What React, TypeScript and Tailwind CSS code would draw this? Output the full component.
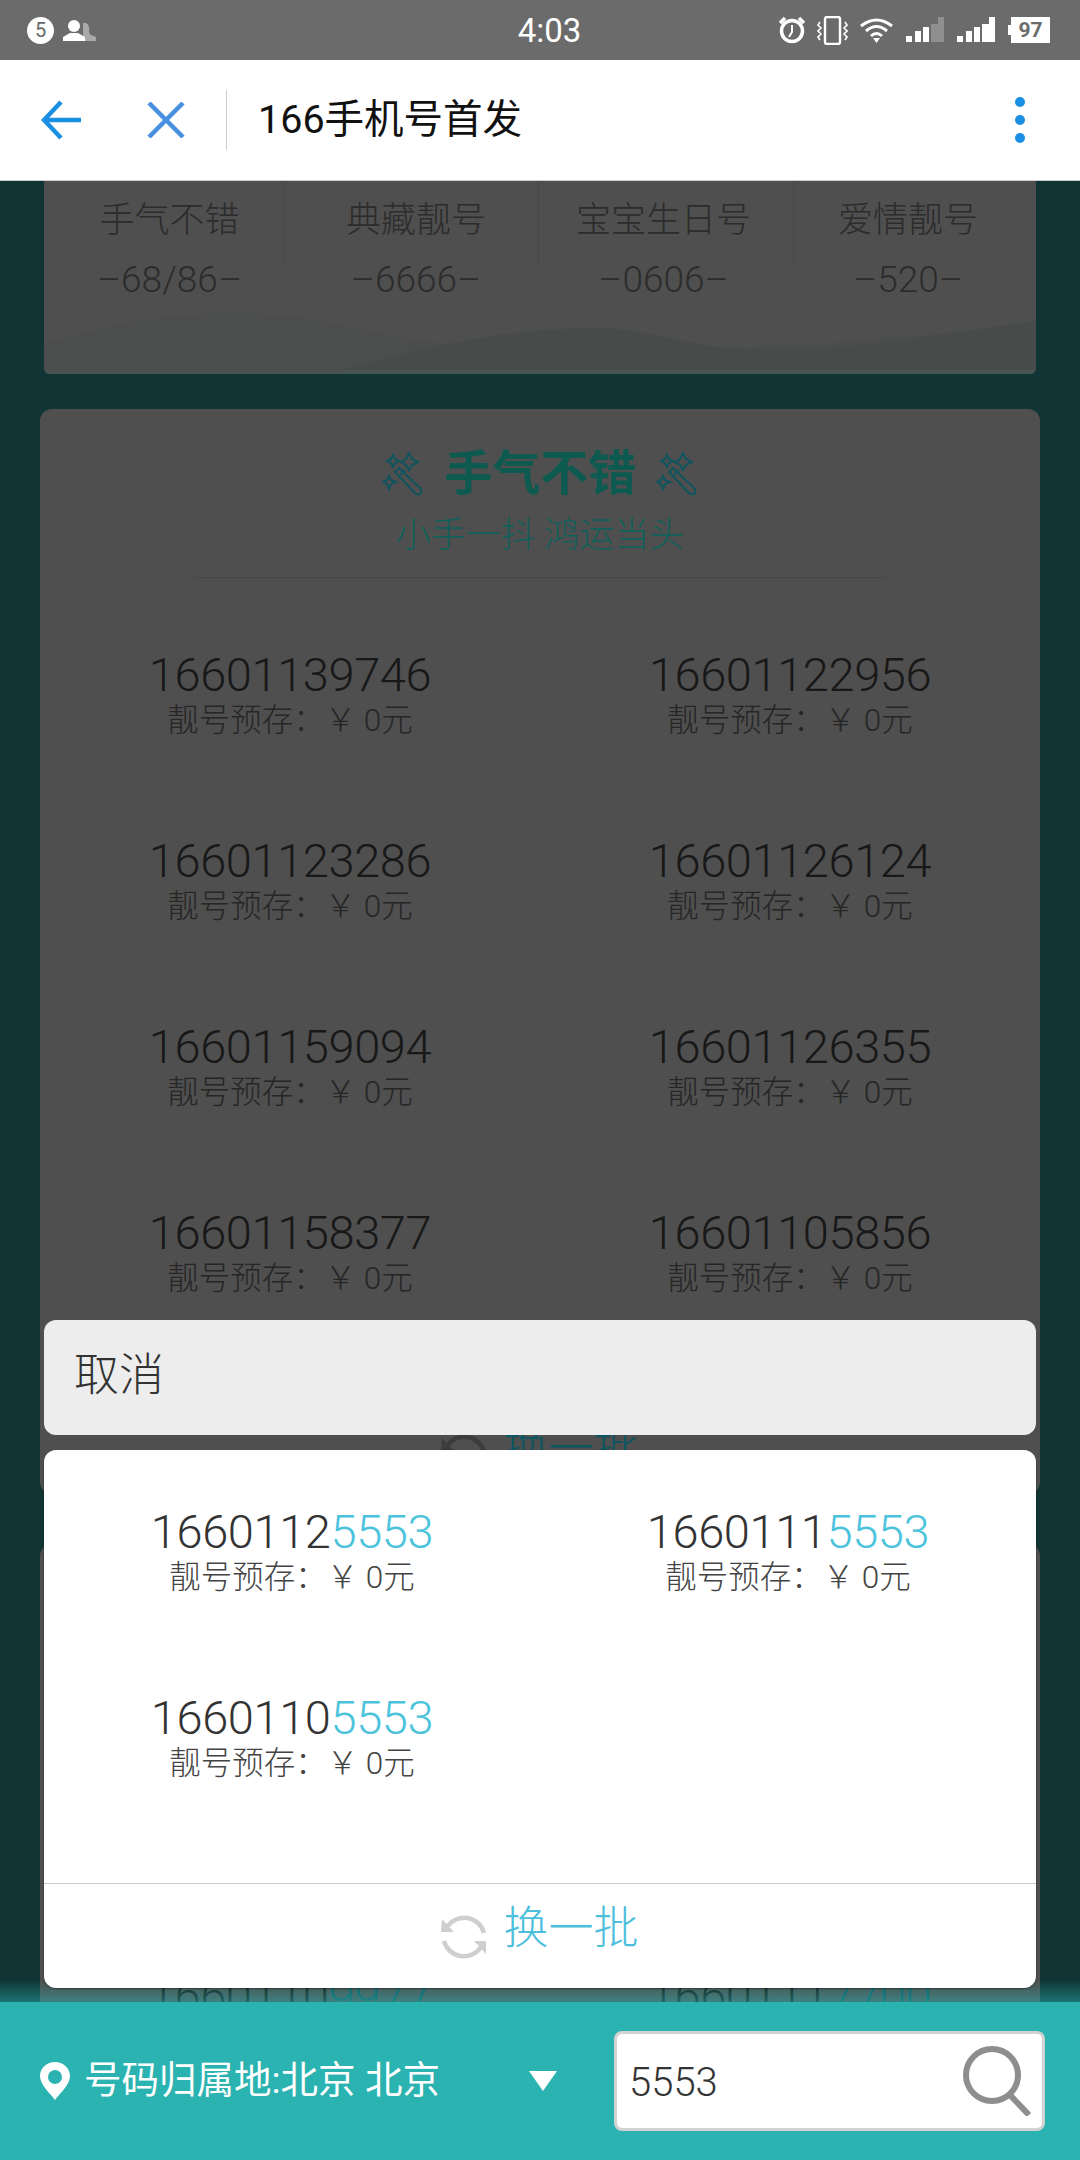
const firstRows = [
  ["16601139746", "16601122956"],
  ["16601123286", "16601126124"],
  ["16601159094", "16601126355"],
  ["16601158377", "16601105856"],
];

const tabs = [
  { title: "手气不错", code: "–68/86–", width: "w-[240px]", nudge: "pl-[12px]" },
  { title: "典藏靓号", code: "–6666–", width: "w-[255px]", nudge: "pl-[10px]" },
  { title: "宝宝生日号", code: "–0606–", width: "w-[255px]", nudge: "pr-[5px]" },
  { title: "爱情靓号", code: "–520–", width: "w-[242px]", nudge: "pr-[14px]" },
];

function Wand() {
  return (
    <svg viewBox="0 0 42 44" className="h-[44px] w-[42px]" fill="none" stroke="#0f5560" strokeWidth="2">
      <path d="M17 16 L39 37 Q40 40 38 42 Q35 43 33 41 L13 20 Z" />
      <path d="M18 23 L23 18" />
      <path d="M27 1 L30 7 L36 10 L30 13 L27 18 L24 13 L19 10 L24 7 Z" />
      <path d="M11 3 L13 7 L17 9 L13 11 L11 15 L9 11 L5 9 L9 7 Z" />
      <path d="M7 24 L9 28 L14 30 L9 32 L7 37 L5 32 L1 30 L5 28 Z" />
    </svg>
  );
}

function Refresh({ color }: { color: string }) {
  return (
    <svg viewBox="0 0 46 46" className="mt-[16px] h-[46px] w-[46px]" fill="none" stroke={color} strokeWidth="4.5">
      <path d="M43 19 A20.5 20.5 0 0 0 6 13" />
      <path d="M3 27 A20.5 20.5 0 0 0 40 33" />
      <path d="M1 5 L0 18 L13 18 Z" fill={color} stroke="none" />
      <path d="M45 40 L45 27 L33 27 Z" fill={color} stroke="none" />
    </svg>
  );
}

function PhoneRow({ number, tail, dim }: { number: string; tail?: string; dim?: boolean }) {
  return (
    <div className="flex h-[186px] flex-col items-center pt-[70px]">
      <div className={`text-[47px] leading-[46px] tracking-[-0.4px] ${dim ? "text-[#181818]" : "text-[#333333]"}`}>
        {number}
        {tail && <span className={dim ? "text-[#0d5a62]" : "text-[#4cc3dc]"}>{tail}</span>}
      </div>
      <div className={`text-[31.5px] leading-[46px] ${dim ? "text-[#262626]" : "text-[#444444]"}`}>靓号预存：￥ 0元</div>
    </div>
  );
}

function StatusIcons() {
  return (
    <div className="flex flex-1 items-center justify-end">
      <svg viewBox="0 0 28 28" className="h-[28px] w-[28px]" fill="none" stroke="white">
        <circle cx="14" cy="15" r="10.5" strokeWidth="3.5" />
        <path d="M14 9 L14 16 L11 21" strokeWidth="2" />
        <path d="M2 7 L7 2 M26 7 L21 2" strokeWidth="3.5" />
      </svg>
      <svg viewBox="0 0 31 29" className="ml-[11px] h-[29px] w-[31px]" fill="none" stroke="white" strokeWidth="1.6">
        <rect x="8" y="1" width="15" height="27" rx="2" strokeWidth="2.4" />
        <path d="M3 6 L1 9 L4 12 L1 15 L4 18 L1 21 L3 24 M28 6 L30 9 L27 12 L30 15 L27 18 L30 21 L28 24" />
      </svg>
      <svg viewBox="0 0 33 25" className="ml-[12px] h-[25px] w-[33px]" fill="none" stroke="white" strokeWidth="3">
        <path d="M1 8 Q16.5 -4 32 8" />
        <path d="M6 13 Q16.5 4 27 13" />
        <path d="M11 18 Q16.5 13 22 18" />
        <path d="M13 20 L16.5 25 L20 20 Z" fill="white" stroke="none" />
      </svg>
      <svg viewBox="0 0 38 26" className="ml-[13px] h-[26px] w-[38px]" fill="white">
        <rect x="0" y="19" width="6" height="6" />
        <rect x="9" y="14" width="6" height="11" />
        <rect x="17" y="10" width="6" height="15" />
        <path d="M25 7 H32 V0 H38 V25 H25 Z" fill="#8f8f8f" />
      </svg>
      <svg viewBox="0 0 38 26" className="ml-[13px] h-[26px] w-[38px]" fill="white">
        <rect x="0" y="19" width="6" height="6" />
        <rect x="9" y="14" width="6" height="11" />
        <rect x="17" y="10" width="6" height="15" />
        <path d="M25 7 H32 V0 H38 V25 H25 Z" />
      </svg>
      <div className="ml-[13px] flex items-center">
        <div className="h-[10px] w-[3px] bg-white" />
        <div className="flex h-[26px] w-[39px] items-center justify-center bg-white text-[21px] font-bold leading-none text-[#6b6b6b]">
          97
        </div>
      </div>
    </div>
  );
}

export default function App() {
  return (
    <div className="relative flex h-[2160px] w-[1080px] flex-col overflow-hidden bg-[#103534] font-['Roboto','Noto_Sans_CJK_SC',sans-serif] font-light">
      <div className="flex h-[60px] shrink-0 items-center bg-[#6b6b6b] pl-[27px] pr-[30px] text-white">
        <div className="flex flex-1 items-center">
          <div className="flex h-[27px] w-[27px] items-center justify-center rounded-full bg-white text-[20px] font-normal leading-none text-[#666666]">
            5
          </div>
          <svg viewBox="0 0 33 21" className="ml-[9px] h-[21px] w-[33px]">
            <path d="M20 3 a5 6 0 0 1 6 8 q0 3 2 4 l5 2 v4 H20 Z" fill="#a9a9a9" />
            <circle cx="11" cy="6" r="6" fill="white" />
            <path d="M0 21 V17 L7 13 H15 L22 17 V21 Z" fill="white" />
          </svg>
        </div>
        <div className="ml-[22px] text-[33px] font-normal leading-none">4:03</div>
        <StatusIcons />
      </div>

      <div className="flex h-[121px] shrink-0 items-center border-b border-[#cccccc] bg-white">
        <svg viewBox="0 0 40 40" className="ml-[41px] h-[40px] w-[40px]" fill="none" stroke="#1a8fe3" strokeWidth="4.5">
          <path d="M40 20 H3" />
          <path d="M20 2 L3 20 L20 38" />
        </svg>
        <svg viewBox="0 0 38 36" className="ml-[66px] h-[36px] w-[38px]" fill="none" stroke="#4a90e2" strokeWidth="4.5">
          <path d="M2 1 L36 35 M36 1 L2 35" />
        </svg>
        <div className="ml-[41px] h-[60px] w-px bg-[#cccccc]" />
        <div className="ml-[31px] flex-1 text-[39.5px] font-normal leading-none text-[#111111]">166手机号首发</div>
        <div className="mr-[55px] flex flex-col gap-[8px]">
          <div className="h-[10px] w-[10px] rounded-full bg-[#1a8fe3]" />
          <div className="h-[10px] w-[10px] rounded-full bg-[#1a8fe3]" />
          <div className="h-[10px] w-[10px] rounded-full bg-[#1a8fe3]" />
        </div>
      </div>

      <main className="min-h-0 flex-1 overflow-hidden">
        <div className="relative mx-[44px] h-[193px] overflow-hidden rounded-b-[6px] bg-[#4f4f4f]">
          <svg viewBox="0 0 992 70" className="absolute bottom-0 left-0 h-[70px] w-[992px]" preserveAspectRatio="none">
            <path d="M0 40 C60 20 130 9 190 9 C270 9 320 30 383 37 C430 44 470 49 510 49 C620 49 850 40 992 17 V70 H0 Z" fill="#4b4e4d" />
            <path d="M280 70 C360 50 450 24 548 24 C600 24 640 40 690 45 C790 50 900 30 992 17 V70 Z" fill="#474c4b" />
            <path d="M0 70 V66 H992 V70 Z" fill="#485452" />
          </svg>
          <div className="relative flex h-[85px]">
            {tabs.map((tab, i) => (
              <div key={tab.code} className={`${tab.width} ${tab.nudge} ${i < 3 ? "border-r border-[#484848]" : ""} flex h-[85px] justify-center pt-[18px]`}>
                <div className="relative flex flex-col items-center">
                  <div className="whitespace-nowrap text-[35px] leading-[44px] text-[#2c2c2c]">{tab.title}</div>
                  <div className="mt-[15px] whitespace-nowrap text-[37px] leading-[44px] text-[#2c2c2c]">{tab.code}</div>
                </div>
              </div>
            ))}
          </div>
        </div>

        <section className="mx-[40px] mt-[35px] h-[1085px] rounded-[12px] bg-[#4f4f4f] pt-[37px]">
          <div className="flex h-[56px] items-center justify-center gap-[20px]">
            <Wand />
            <h2 className="text-[48px] font-bold leading-[56px] text-[#0c5a50]">手气不错</h2>
            <Wand />
          </div>
          <div className="mt-[12px] text-center text-[35px] leading-[44px] text-[#11605a]">小手一抖 鸿运当头</div>
          <div className="mx-[155px] mt-[19px] h-px bg-[#454545]" />
          <div className="mt-[4px] grid grid-cols-2">
            {firstRows.flat().map((n) => (
              <PhoneRow key={n} number={n} dim />
            ))}
          </div>
          <div className="mt-[77px] flex h-[90px] items-center justify-center gap-[16px]">
            <Refresh color="#3c3c3c" />
            <span className="text-[45px] leading-none text-[#0d5560]">换一批</span>
          </div>
        </section>

        <section className="mx-[40px] mt-[50px] rounded-[12px] bg-[#4f4f4f] pt-[359px]">
          <div className="grid grid-cols-2">
            <PhoneRow number="1660110" tail="9977" dim />
            <PhoneRow number="1660111" tail="7700" dim />
          </div>
        </section>
      </main>

      <div className="relative z-10 flex h-[158px] shrink-0 items-center bg-[#2ab3b0] pl-[40px]">
        <div className="absolute bottom-full left-0 h-[22px] w-full bg-linear-to-t from-[#2ab3b0]/50 to-transparent" />
        <svg viewBox="0 0 30 38" className="h-[38px] w-[30px]">
          <path fillRule="evenodd" d="M15 0 C7 0 0 6 0 14 C0 23 10 31 15 38 C20 31 30 23 30 14 C30 6 23 0 15 0 Z M15 8 A7 7 0 1 1 15 22 A7 7 0 1 1 15 8 Z" fill="white" />
        </svg>
        <div className="ml-[14px] w-[356px] whitespace-nowrap text-[37.5px] font-normal leading-none text-white">号码归属地:北京 北京</div>
        <div className="ml-[89px] h-0 w-0 border-x-[14px] border-t-[20px] border-x-transparent border-t-white" />
        <div className="ml-[57px] flex h-[100px] w-[431px] items-center justify-between rounded-[8px] border-[3px] border-[#d2d2d2] bg-white pl-[12px] pr-[11px]">
          <span className="pt-[4px] text-[40px] leading-none text-[#333333]">5553</span>
          <svg viewBox="0 0 68 70" className="h-[70px] w-[68px]" fill="none" stroke="#8e8e8e">
            <circle cx="29" cy="29" r="26" strokeWidth="6" />
            <path d="M46 48 L66 69" strokeWidth="6" />
          </svg>
        </div>
      </div>

      <div className="absolute left-[44px] top-[1320px] z-20 flex w-[992px] flex-col gap-[15px]">
        <div className="flex h-[115px] items-center rounded-[12px] bg-[#ededed] pb-[4px] pl-[30px] text-[45px] leading-none text-[#333333]">取消</div>
        <div className="h-[538px] rounded-[12px] bg-white shadow-[0_1px_2px_rgba(0,0,0,0.4)]">
          <div className="-mt-[11px] grid h-[372px] grid-cols-2">
            <PhoneRow number="1660112" tail="5553" />
            <PhoneRow number="1660111" tail="5553" />
            <PhoneRow number="1660110" tail="5553" />
          </div>
          <div className="mt-[72px] flex h-[90px] items-center justify-center gap-[16px] border-t border-[#cccccc]">
            <Refresh color="#cfcfcf" />
            <span className="text-[45px] leading-none text-[#4cbfdc]">换一批</span>
          </div>
        </div>
      </div>
    </div>
  );
}
